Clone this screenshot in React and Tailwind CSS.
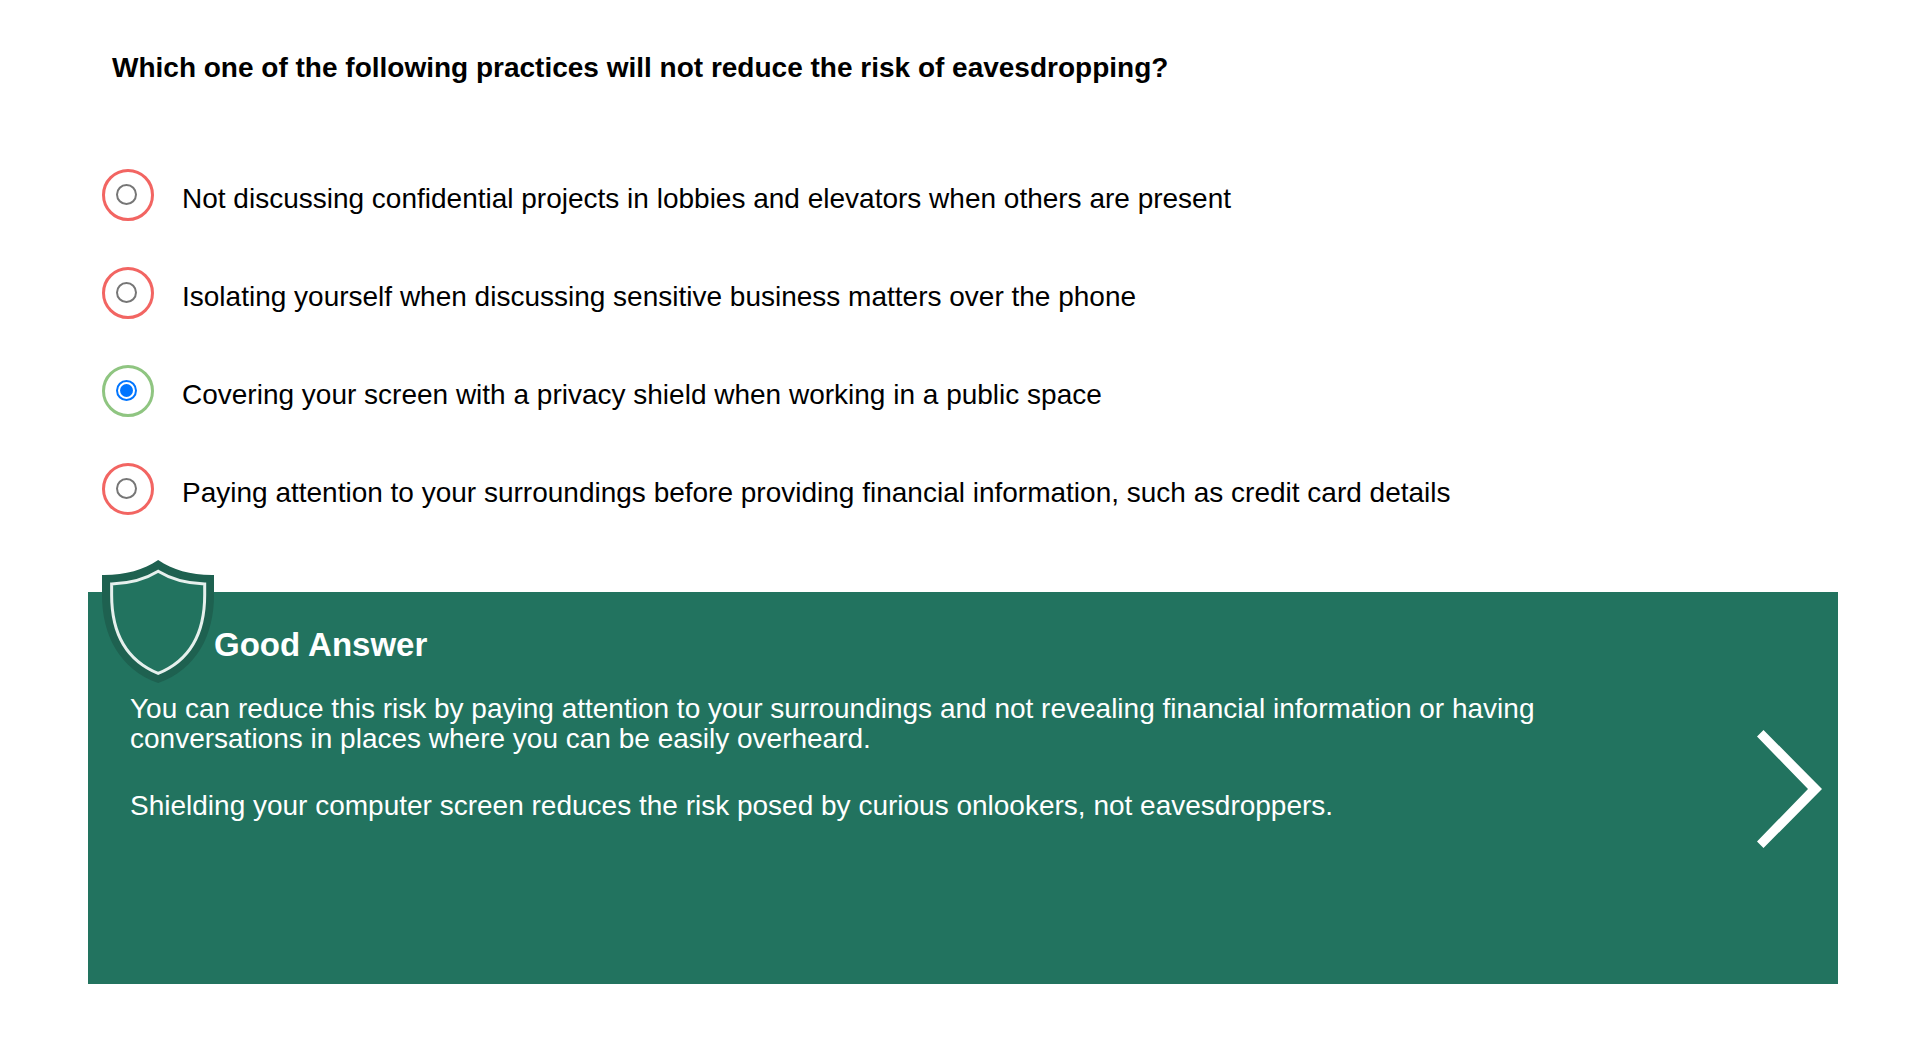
import { useState } from "react";

const options = [
  { text: "Not discussing confidential projects in lobbies and elevators when others are present", correct: false },
  { text: "Isolating yourself when discussing sensitive business matters over the phone", correct: false },
  { text: "Covering your screen with a privacy shield when working in a public space", correct: true },
  { text: "Paying attention to your surroundings before providing financial information, such as credit card details", correct: false },
];

function Option({ id, text, correct, checked, onSelect }) {
  return (
    <div className="flex items-center gap-7">
      <span
        className={`flex size-[52px] shrink-0 items-center justify-center rounded-full border-[3px] pr-1 pb-0.5 ${
          correct ? "border-[#8fc581]" : "border-[#f26562]"
        }`}
      >
        <input
          id={id}
          type="radio"
          name="answer"
          checked={checked}
          onChange={onSelect}
          className="flex size-[21px] appearance-none items-center justify-center rounded-full border-2 border-[#767676] bg-white before:size-[13px] before:rounded-full checked:border-[#0075ff] checked:before:bg-[#0075ff]"
        />
      </span>
      <label htmlFor={id} className="pt-2">
        {text}
      </label>
    </div>
  );
}

function Shield() {
  return (
    <svg viewBox="66 60 337 370" className="absolute -top-8 left-3.5 h-[123px] w-28" aria-hidden="true">
      <path
        d="M235 60C280 91 335 106 403 105V165C403 285 352 388 235 430C118 388 66 285 66 165V105C134 106 190 91 235 60Z"
        fill="#1e6150"
      />
      <path
        d="M235 94C274 118 320 131 375 132V165C375 285 330 362 235 401C140 362 95 285 95 165V132C150 131 196 118 235 94Z"
        fill="#22735f"
        stroke="#e6f0ed"
        strokeWidth="9"
      />
    </svg>
  );
}

export default function App() {
  const [selected, setSelected] = useState(2);
  return (
    <main className="min-h-screen bg-white pt-[52px] pr-[69px] pb-[60px] pl-[88px] font-['Liberation_Sans',Arial,sans-serif] text-[28px] leading-8 text-black">
      <fieldset>
        <legend className="pl-6 font-bold">
          Which one of the following practices will not reduce the risk of eavesdropping?
        </legend>
        <div className="mt-[85px] flex flex-col gap-[46px] pl-3.5">
          {options.map((option, i) => (
            <Option
              key={option.text}
              id={`answer-${i}`}
              text={option.text}
              correct={option.correct}
              checked={selected === i}
              onSelect={() => setSelected(i)}
            />
          ))}
        </div>
      </fieldset>

      <section className="relative mt-[77px] flex min-h-[392px] items-center justify-between bg-[#22735f] pr-4 pl-[42px] text-white">
        <Shield />
        <div className="max-w-[1440px] self-start pt-[33px]">
          <h2 className="pl-[84px] text-[33px] leading-10 font-bold">Good Answer</h2>
          <p className="mt-[29px] leading-[30px]">
            You can reduce this risk by paying attention to your surroundings and not revealing financial
            information or having conversations in places where you can be easily overheard.
          </p>
          <p className="mt-[37px] leading-[30px]">
            Shielding your computer screen reduces the risk posed by curious onlookers, not eavesdroppers.
          </p>
        </div>
        <button type="button" aria-label="Next" className="shrink-0 pt-0.5">
          <svg viewBox="0 0 65 118" className="h-[118px] w-[65px]" fill="#fff">
            <path d="M6.500 0L65 59L6.500 118L0 111.500L51 59L0 6.500Z" />
          </svg>
        </button>
      </section>
    </main>
  );
}
